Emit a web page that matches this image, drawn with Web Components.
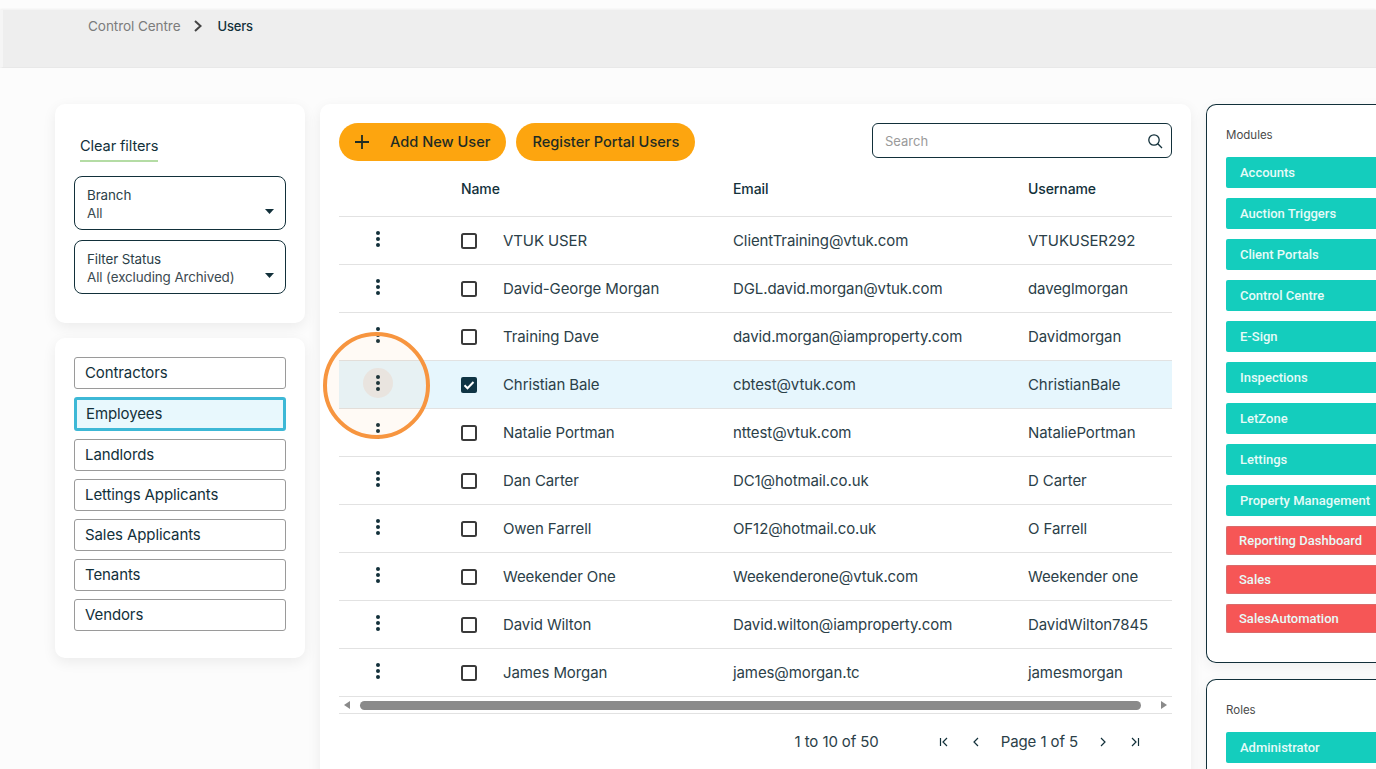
<!doctype html>
<html lang="en">
<head>
<meta charset="utf-8">
<title>Users</title>
<style>
	html, body { margin: 0; height: 769px; overflow: hidden; background: #fcfcfc; font-family: Inter, "Liberation Sans", sans-serif; color: #12303a; }
</style>
</head>
<body>
<user-page></user-page>

<script>
// small helper, every element has its own shadow root
function shadow(el, html) {
	el.attachShadow({ mode: 'open' }).innerHTML = html;
}

class TopBar extends HTMLElement {
	connectedCallback() {
		shadow(this, `<style>
			:host { display: block; margin-top: 10px; height: 58px; box-sizing: border-box; background: #eeeeee; border-left: 3px solid #f5f5f5; border-bottom: 1px solid #e8e8e8; box-shadow: 0 -1px 2px rgba(0,0,0,.05); }
			.crumbs { display: flex; align-items: center; padding: 8px 0 0 85px; font-size: 13.6px; line-height: 16px; }
			.a { color: #7c7c7c; letter-spacing: -.1px; }
			svg { margin: 0 14px 0 13px; }
			.b { color: #12303a; font-weight: 500; font-size: 13px; letter-spacing: -.2px; }
		</style>
		<div class="crumbs"><span class="a">Control Centre</span>
		<svg width="10" height="14" viewBox="0 0 10 14"><path d="M2 2l5.5 5L2 12" fill="none" stroke="#444" stroke-width="2"/></svg>
		<span class="b">Users</span></div>`);
	}
}

class CardBox extends HTMLElement {
	connectedCallback() {
		shadow(this, `<style>
			:host { display: block; background: #fff; border-radius: 10px; box-shadow: 0 4px 14px rgba(0,0,0,.07); }
		</style><slot></slot>`);
	}
}

class FilterSelect extends HTMLElement {
	connectedCallback() {
		shadow(this, `<style>
			:host { display: block; position: relative; height: 54px; box-sizing: border-box; border: 1px solid #12303a; border-radius: 8px; padding: 9px 12px; font-size: 13.4px; line-height: 18px; color: #3c4a50; }
			.l { color: #2b4048; letter-spacing: -.1px; }
			.v { letter-spacing: -.1px; }
			svg { position: absolute; right: 11px; top: 32px; }
		</style>
		<div class="l">${this.getAttribute('label')}</div>
		<div class="v">${this.getAttribute('value')}</div>
		<svg width="9" height="5" viewBox="0 0 9 5"><path d="M0 0h9L4.5 5z" fill="#12303a"/></svg>`);
	}
}

class TypeButton extends HTMLElement {
	connectedCallback() {
		const on = this.hasAttribute('active');
		shadow(this, `<style>
			:host { display: block; box-sizing: border-box; height: ${on ? 34 : 32}px; border: ${on ? '3px solid #3db8d6' : '1px solid #9a9a9a'}; border-radius: 3px; background: ${on ? '#e8f8fd' : '#fff'}; padding-left: ${on ? 9 : 10}px; font-size: 15px; line-height: ${on ? 28 : 30}px; color: #12303a; letter-spacing: -.1px; }
		</style><slot></slot>`);
	}
}

class SideFilters extends HTMLElement {
	connectedCallback() {
		shadow(this, `<style>
			:host { display: flex; flex-direction: column; gap: 15px; width: 250px; flex: none; }
			.top { padding: 33px 19px 29px; display: flex; flex-direction: column; }
			.clear { align-self: flex-start; margin: 0 0 14px 6px; padding-bottom: 5px; border-bottom: 2px solid #b4dca4; font-size: 14.6px; line-height: 18px; color: #12303a; letter-spacing: -.1px; }
			filter-select + filter-select { margin-top: 10px; }
			.types { padding: 19px 19px 27px; display: flex; flex-direction: column; gap: 8px; }
		</style>
		<card-box><div class="top">
			<div class="clear">Clear filters</div>
			<filter-select label="Branch" value="All"></filter-select>
			<filter-select label="Filter Status" value="All (excluding Archived)"></filter-select>
		</div></card-box>
		<card-box><div class="types">
			<type-button>Contractors</type-button>
			<type-button active>Employees</type-button>
			<type-button>Landlords</type-button>
			<type-button>Lettings Applicants</type-button>
			<type-button>Sales Applicants</type-button>
			<type-button>Tenants</type-button>
			<type-button>Vendors</type-button>
		</div></card-box>`);
	}
}

class PillButton extends HTMLElement {
	connectedCallback() {
		shadow(this, `<style>
			:host { display: inline-flex; align-items: center; box-sizing: border-box; height: 38px; border-radius: 19px; background: #fda50f; padding: 0 16px; font-size: 14.6px; font-weight: 500; color: #1e2c24; white-space: nowrap; }
			::slotted(svg) { margin-right: 21px; }
		</style><slot></slot>`);
	}
}

class SearchBox extends HTMLElement {
	connectedCallback() {
		shadow(this, `<style>
			:host { display: flex; align-items: center; justify-content: space-between; box-sizing: border-box; width: 300px; height: 35px; border: 1px solid #12303a; border-radius: 6px; padding: 0 8px 0 12px; font-size: 13px; color: #9a9a9a; }
		</style>
		<span>Search</span>
		<svg width="16" height="16" viewBox="0 0 16 16" fill="none" stroke="#12303a" stroke-width="1.3"><circle cx="7" cy="7" r="5.2"/><path d="M10.8 10.8L15 15"/></svg>`);
	}
}

class UserRow extends HTMLElement {
	connectedCallback() {
		const sel = this.hasAttribute('selected');
		const box = sel
			? `<svg width="16" height="16" viewBox="0 0 16 16"><rect width="16" height="16" rx="2" fill="#0f3444"/><path d="M3.5 8.2l3 3 6-6.2" fill="none" stroke="#fff" stroke-width="2"/></svg>`
			: `<svg width="16" height="16" viewBox="0 0 16 16"><rect x="1" y="1" width="14" height="14" rx="1.5" fill="#fff" stroke="#3a3a3a" stroke-width="2"/></svg>`;
		shadow(this, `<style>
			:host { display: grid; grid-template-columns: 122px 42px 230px 295px 1fr; align-items: center; height: 48px; box-sizing: border-box; border-bottom: 1px solid #e2e2e2; background: ${sel ? '#e6f6fd' : '#fff'}; font-size: 15px; color: #2b4048; letter-spacing: -.1px; white-space: nowrap; }
			.menu { width: 30px; height: 30px; margin-left: 24px; border-radius: 50%; display: flex; align-items: center; justify-content: center; background: ${sel ? '#e8e8e8' : 'transparent'}; position: relative; top: -2px; }
			.check { display: flex; }
		</style>
		<div class="menu"><svg width="6" height="16" viewBox="0 0 6 16" fill="#12303a"><circle cx="3" cy="2" r="2"/><circle cx="3" cy="8" r="2"/><circle cx="3" cy="14" r="2"/></svg></div>
		<div class="check">${box}</div>
		<div>${this.getAttribute('name')}</div>
		<div>${this.getAttribute('email')}</div>
		<div>${this.getAttribute('username')}</div>`);
	}
}

class UserTable extends HTMLElement {
	connectedCallback() {
		const users = [
			['VTUK USER', 'ClientTraining@vtuk.com', 'VTUKUSER292'],
			['David-George Morgan', 'DGL.david.morgan@vtuk.com', 'daveglmorgan'],
			['Training Dave', 'david.morgan@iamproperty.com', 'Davidmorgan'],
			['Christian Bale', 'cbtest@vtuk.com', 'ChristianBale'],
			['Natalie Portman', 'nttest@vtuk.com', 'NataliePortman'],
			['Dan Carter', 'DC1@hotmail.co.uk', 'D Carter'],
			['Owen Farrell', 'OF12@hotmail.co.uk', 'O Farrell'],
			['Weekender One', 'Weekenderone@vtuk.com', 'Weekender one'],
			['David Wilton', 'David.wilton@iamproperty.com', 'DavidWilton7845'],
			['James Morgan', 'james@morgan.tc', 'jamesmorgan']
		];
		const rows = users.map((u, i) => `<user-row name="${u[0]}" email="${u[1]}" username="${u[2]}"${i == 3 ? ' selected' : ''}></user-row>`).join('');
		shadow(this, `<style>
			:host { display: block; }
			.head { display: grid; grid-template-columns: 122px 272px 295px 1fr; height: 56px; padding-top: 0; box-sizing: border-box; border-bottom: 1px solid #e2e2e2; font-size: 14px; font-weight: 500; line-height: 56px; color: #12303a; letter-spacing: -.1px; }
			.bar { display: flex; align-items: center; height: 16px; border-bottom: 1px solid #e2e2e2; padding: 0 5px; }
			.thumb { height: 9px; border-radius: 5px; background: #8a8a8a; margin: 0 19px 0 9px; flex: 1; }
			.pages { display: flex; align-items: center; justify-content: flex-end; height: 55px; padding-right: 32px; font-size: 15px; color: #2b4048; letter-spacing: -.1px; }
			.count { margin-right: 60px; }
			.pages svg { display: block; }
			.txt { margin: 0 20px 0 20px; }
			.gap { width: 22px; }
		</style>
		<div class="head"><span></span><span>Name</span><span>Email</span><span>Username</span></div>
		${rows}
		<div class="bar">
			<svg width="7" height="8" viewBox="0 0 7 8"><path d="M6 0v8L0 4z" fill="#8a8a8a"/></svg>
			<div class="thumb"></div>
			<svg width="7" height="8" viewBox="0 0 7 8"><path d="M1 0v8l6-4z" fill="#8a8a8a"/></svg>
		</div>
		<div class="pages">
			<span class="count">1 to 10 of 50</span>
			<svg width="10" height="10" viewBox="0 0 10 10" fill="none" stroke="#12303a" stroke-width="1.2"><path d="M1.5 1v8M8 1L4 5l4 4"/></svg>
			<div class="gap"></div>
			<svg width="10" height="10" viewBox="0 0 10 10" fill="none" stroke="#12303a" stroke-width="1.2"><path d="M7 1L3 5l4 4"/></svg>
			<span class="txt">Page 1 of 5</span>
			<svg width="10" height="10" viewBox="0 0 10 10" fill="none" stroke="#12303a" stroke-width="1.2"><path d="M3 1l4 4-4 4"/></svg>
			<div class="gap"></div>
			<svg width="10" height="10" viewBox="0 0 10 10" fill="none" stroke="#12303a" stroke-width="1.2"><path d="M2 1l4 4-4 4M8.5 1v8"/></svg>
		</div>`);
	}
}

class ModuleChip extends HTMLElement {
	connectedCallback() {
		const off = this.hasAttribute('off');
		shadow(this, `<style>
			:host { display: block; box-sizing: border-box; height: ${off ? 29 : 31}px; border-radius: 2px; background: ${off ? '#f65656' : '#14cdbd'}; ${off ? 'border: 1px solid #d96a6a; border-right: 0;' : ''} padding-left: ${off ? 12 : 14}px; font-family: Roboto, sans-serif; font-size: 13px; font-weight: 500; line-height: ${off ? 27 : 31}px; color: #e6fbf8; white-space: nowrap; }
		</style><slot></slot>`);
	}
}

class SidePanel extends HTMLElement {
	connectedCallback() {
		shadow(this, `<style>
			:host { display: block; box-sizing: border-box; border: 1px solid #12303a; border-right: 0; border-radius: 10px 0 0 10px; background: #fff; padding: 23px 0 29px 19px; box-shadow: 0 4px 14px rgba(0,0,0,.06); }
			.t { font-size: 11.5px; line-height: 14px; margin-bottom: 15px; color: #4a4a4a; }
			.list { display: flex; flex-direction: column; gap: 10px; }
		</style>
		<div class="t">${this.getAttribute('title')}</div>
		<div class="list"><slot></slot></div>`);
	}
}

class UserPage extends HTMLElement {
	connectedCallback() {
		shadow(this, `<style>
			:host { display: block; width: 1376px; height: 769px; overflow: hidden; position: relative; }
			.body { display: flex; gap: 15px; padding: 36px 0 0 55px; align-items: flex-start; }
			.main { width: 871px; flex: none; box-sizing: border-box; padding: 19px 19px 20px; }
			.tools { display: flex; align-items: flex-start; gap: 10px; }
			search-box { margin-left: auto; }
			.right { width: 260px; flex: none; display: flex; flex-direction: column; gap: 16px; }
			.reds { display: flex; flex-direction: column; gap: 10px; }
			.ring { position: absolute; left: 323px; top: 332px; width: 107px; height: 107px; box-sizing: border-box; border: 4px solid #f7953f; border-radius: 50%; background: rgba(247,149,63,.05); }
		</style>
		<top-bar></top-bar>
		<div class="body">
			<side-filters></side-filters>
			<card-box class="main">
				<div class="tools">
					<pill-button><svg width="14" height="14" viewBox="0 0 14 14"><path d="M7 0v14M0 7h14" stroke="#1e2c24" stroke-width="1.8"/></svg>Add New User</pill-button>
					<pill-button>Register Portal Users</pill-button>
					<search-box></search-box>
				</div>
				<user-table></user-table>
			</card-box>
			<div class="right">
				<side-panel title="Modules">
					<module-chip>Accounts</module-chip>
					<module-chip>Auction Triggers</module-chip>
					<module-chip>Client Portals</module-chip>
					<module-chip>Control Centre</module-chip>
					<module-chip>E-Sign</module-chip>
					<module-chip>Inspections</module-chip>
					<module-chip>LetZone</module-chip>
					<module-chip>Lettings</module-chip>
					<module-chip>Property Management</module-chip>
					<module-chip off>Reporting Dashboard</module-chip>
					<module-chip off>Sales</module-chip>
					<module-chip off>SalesAutomation</module-chip>
				</side-panel>
				<side-panel title="Roles">
					<module-chip>Administrator</module-chip>
				</side-panel>
			</div>
		</div>
		<div class="ring"></div>`);
	}
}

customElements.define('top-bar', TopBar);
customElements.define('card-box', CardBox);
customElements.define('filter-select', FilterSelect);
customElements.define('type-button', TypeButton);
customElements.define('side-filters', SideFilters);
customElements.define('pill-button', PillButton);
customElements.define('search-box', SearchBox);
customElements.define('user-row', UserRow);
customElements.define('user-table', UserTable);
customElements.define('module-chip', ModuleChip);
customElements.define('side-panel', SidePanel);
customElements.define('user-page', UserPage);
</script>
</body>
</html>
